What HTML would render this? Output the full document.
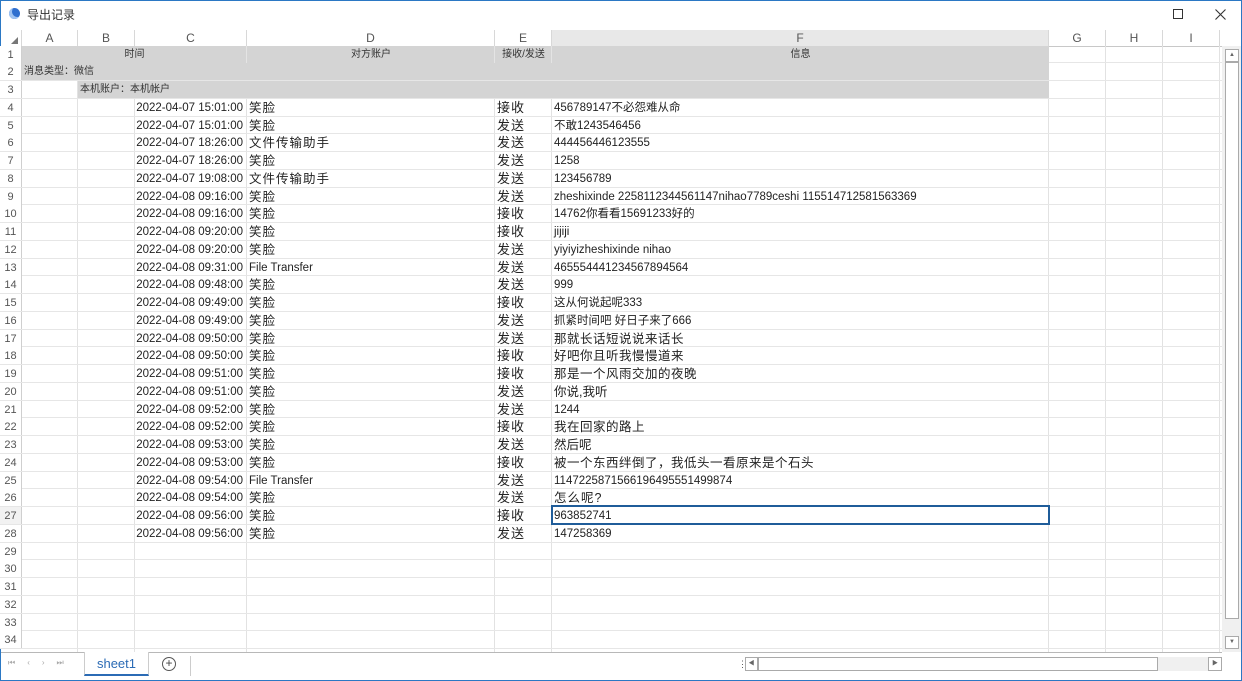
<!DOCTYPE html>
<html><head><meta charset="utf-8"><style>
*{box-sizing:border-box;margin:0;padding:0}
body{width:1242px;height:681px;overflow:hidden;background:#fff;font-family:"Liberation Sans","Noto Sans CJK SC",sans-serif;position:relative}
.win{position:absolute;left:0;top:0;width:1242px;height:681px;border:1px solid #2b78c4}
.title{position:absolute;left:27px;top:6px;font-size:12px;color:#333}
.ico{position:absolute;left:9px;top:8px;width:11px;height:11px;border-radius:50%;background:#2f6fcf;box-shadow:inset 3px -2px 0 #9fc3f2}
.colh{position:absolute;top:30px;height:16px;font-size:12px;color:#555;text-align:center;line-height:16px;border-right:1px solid #d8d8d8}
.hdrline{position:absolute;left:0;top:46px;width:1222px;height:0;border-top:1px solid #c8c8c8}
.vl{position:absolute;top:46px;height:606px;width:1px;background:#e2e2e2}
.grid{position:absolute;left:0;top:45.5px;width:1222px}
.row{position:relative;height:17.75px;border-bottom:1px solid #e6e6e6;font-size:12px;white-space:nowrap}
.rn{position:absolute;left:0;width:22px;text-align:center;color:#555;font-size:11px;line-height:19px;background:#fff;border-right:1px solid #cfcfcf;height:17px}
.g{position:absolute;top:0;height:17px;background:#d4d4d4}
.c{position:absolute;top:0;line-height:18px;color:#222}
.d{left:135px;width:108px;text-align:right;font-size:11.5px}
.p{left:249px;font-size:12.5px;letter-spacing:1px}
.e{left:497px;font-size:13px;letter-spacing:1px}
.f{left:554px;font-size:11.5px}
.sm{font-size:10px;line-height:17px;color:#333}
</style></head><body>
<div class="win"></div>
<div class="ico"></div>
<div class="title">导出记录</div>
<div style="position:absolute;left:1173px;top:9px;width:10px;height:10px;border:1px solid #333"></div>
<svg style="position:absolute;left:1215px;top:9px" width="11" height="11"><path d="M0.5 0.5L10.5 10.5M10.5 0.5L0.5 10.5" stroke="#333" stroke-width="1.1"/></svg>

<div class="colh" style="left:0;width:22px"><span style="position:absolute;right:3px;bottom:2px;width:0;height:0;border-left:7px solid transparent;border-bottom:7px solid #777"></span></div>
<div class="colh" style="left:22px;width:56px">A</div>
<div class="colh" style="left:78px;width:57px">B</div>
<div class="colh" style="left:135px;width:112px">C</div>
<div class="colh" style="left:247px;width:248px">D</div>
<div class="colh" style="left:495px;width:57px">E</div>
<div class="colh" style="left:552px;width:497px;background:#e8e8e8">F</div>
<div class="colh" style="left:1049px;width:57px">G</div>
<div class="colh" style="left:1106px;width:57px">H</div>
<div class="colh" style="left:1163px;width:57px">I</div>
<div class="hdrline"></div>

<div class="vl" style="left:77px"></div><div class="vl" style="left:134px"></div><div class="vl" style="left:246px"></div><div class="vl" style="left:494px"></div><div class="vl" style="left:551px"></div><div class="vl" style="left:1048px"></div><div class="vl" style="left:1105px"></div><div class="vl" style="left:1162px"></div><div class="vl" style="left:1219px"></div>

<div class="grid">
<div class="row"><div class="rn">1</div><div class="g" style="left:22px;width:1027px"></div><div class="g" style="left:246px;width:1px;background:#e4e4e4"></div><div class="g" style="left:494px;width:1px;background:#e4e4e4"></div><div class="g" style="left:551px;width:1px;background:#e4e4e4"></div>
<div class="c sm" style="left:22px;width:225px;text-align:center">时间</div><div class="c sm" style="left:247px;width:248px;text-align:center">对方账户</div><div class="c sm" style="left:495px;width:57px;text-align:center">接收/发送</div><div class="c sm" style="left:552px;width:497px;text-align:center">信息</div></div>
<div class="row"><div class="rn">2</div><div class="g" style="left:22px;width:1027px"></div><div class="c sm" style="left:24px">消息类型：微信</div></div>
<div class="row"><div class="rn">3</div><div class="g" style="left:78px;width:971px"></div><div class="c sm" style="left:80px">本机账户：本机帐户</div></div>
<div class="row"><div class="rn">4</div><span class="c d">2022-04-07 15:01:00</span><span class="c p">笑脸</span><span class="c e">接收</span><span class="c f">456789147不必怨难从命</span></div>
<div class="row"><div class="rn">5</div><span class="c d">2022-04-07 15:01:00</span><span class="c p">笑脸</span><span class="c e">发送</span><span class="c f">不敢1243546456</span></div>
<div class="row"><div class="rn">6</div><span class="c d">2022-04-07 18:26:00</span><span class="c p">文件传输助手</span><span class="c e">发送</span><span class="c f">444456446123555</span></div>
<div class="row"><div class="rn">7</div><span class="c d">2022-04-07 18:26:00</span><span class="c p">笑脸</span><span class="c e">发送</span><span class="c f">1258</span></div>
<div class="row"><div class="rn">8</div><span class="c d">2022-04-07 19:08:00</span><span class="c p">文件传输助手</span><span class="c e">发送</span><span class="c f">123456789</span></div>
<div class="row"><div class="rn">9</div><span class="c d">2022-04-08 09:16:00</span><span class="c p">笑脸</span><span class="c e">发送</span><span class="c f">zheshixinde 2258112344561147nihao7789ceshi 115514712581563369</span></div>
<div class="row"><div class="rn">10</div><span class="c d">2022-04-08 09:16:00</span><span class="c p">笑脸</span><span class="c e">接收</span><span class="c f">14762你看看15691233好的</span></div>
<div class="row"><div class="rn">11</div><span class="c d">2022-04-08 09:20:00</span><span class="c p">笑脸</span><span class="c e">接收</span><span class="c f">jijiji</span></div>
<div class="row"><div class="rn">12</div><span class="c d">2022-04-08 09:20:00</span><span class="c p">笑脸</span><span class="c e">发送</span><span class="c f">yiyiyizheshixinde nihao</span></div>
<div class="row"><div class="rn">13</div><span class="c d">2022-04-08 09:31:00</span><span class="c p" style="font-size:11.5px;letter-spacing:0">File Transfer</span><span class="c e">发送</span><span class="c f">465554441234567894564</span></div>
<div class="row"><div class="rn">14</div><span class="c d">2022-04-08 09:48:00</span><span class="c p">笑脸</span><span class="c e">发送</span><span class="c f">999</span></div>
<div class="row"><div class="rn">15</div><span class="c d">2022-04-08 09:49:00</span><span class="c p">笑脸</span><span class="c e">接收</span><span class="c f">这从何说起呢333</span></div>
<div class="row"><div class="rn">16</div><span class="c d">2022-04-08 09:49:00</span><span class="c p">笑脸</span><span class="c e">发送</span><span class="c f">抓紧时间吧 好日子来了666</span></div>
<div class="row"><div class="rn">17</div><span class="c d">2022-04-08 09:50:00</span><span class="c p">笑脸</span><span class="c e">发送</span><span class="c f" style="font-size:12.5px;letter-spacing:.5px">那就长话短说说来话长</span></div>
<div class="row"><div class="rn">18</div><span class="c d">2022-04-08 09:50:00</span><span class="c p">笑脸</span><span class="c e">接收</span><span class="c f" style="font-size:12.5px;letter-spacing:.5px">好吧你且听我慢慢道来</span></div>
<div class="row"><div class="rn">19</div><span class="c d">2022-04-08 09:51:00</span><span class="c p">笑脸</span><span class="c e">接收</span><span class="c f" style="font-size:12.5px;letter-spacing:.5px">那是一个风雨交加的夜晚</span></div>
<div class="row"><div class="rn">20</div><span class="c d">2022-04-08 09:51:00</span><span class="c p">笑脸</span><span class="c e">发送</span><span class="c f" style="font-size:12.5px">你说,我听</span></div>
<div class="row"><div class="rn">21</div><span class="c d">2022-04-08 09:52:00</span><span class="c p">笑脸</span><span class="c e">发送</span><span class="c f">1244</span></div>
<div class="row"><div class="rn">22</div><span class="c d">2022-04-08 09:52:00</span><span class="c p">笑脸</span><span class="c e">接收</span><span class="c f" style="font-size:12.5px;letter-spacing:.5px">我在回家的路上</span></div>
<div class="row"><div class="rn">23</div><span class="c d">2022-04-08 09:53:00</span><span class="c p">笑脸</span><span class="c e">发送</span><span class="c f" style="font-size:12.5px">然后呢</span></div>
<div class="row"><div class="rn">24</div><span class="c d">2022-04-08 09:53:00</span><span class="c p">笑脸</span><span class="c e">接收</span><span class="c f" style="font-size:12.5px;letter-spacing:.5px">被一个东西绊倒了，我低头一看原来是个石头</span></div>
<div class="row"><div class="rn">25</div><span class="c d">2022-04-08 09:54:00</span><span class="c p" style="font-size:11.5px;letter-spacing:0">File Transfer</span><span class="c e">发送</span><span class="c f">1147225871566196495551499874</span></div>
<div class="row"><div class="rn">26</div><span class="c d">2022-04-08 09:54:00</span><span class="c p">笑脸</span><span class="c e">发送</span><span class="c f" style="font-size:12.5px;letter-spacing:1px">怎么呢?</span></div>
<div class="row"><div class="rn" style="background:#f2f2f2">27</div><span class="c d">2022-04-08 09:56:00</span><span class="c p">笑脸</span><span class="c e">接收</span><span class="c f">963852741</span><div style="position:absolute;left:551px;top:-2px;width:499px;height:20px;border:2px solid #1f5c99"></div></div>
<div class="row"><div class="rn">28</div><span class="c d">2022-04-08 09:56:00</span><span class="c p">笑脸</span><span class="c e">发送</span><span class="c f">147258369</span></div>
<div class="row"><div class="rn">29</div></div>
<div class="row"><div class="rn">30</div></div>
<div class="row"><div class="rn">31</div></div>
<div class="row"><div class="rn">32</div></div>
<div class="row"><div class="rn">33</div></div>
<div class="row"><div class="rn">34</div></div>
</div>

<div style="position:absolute;left:1222px;top:46px;width:19px;height:606px;background:#f0f0f0"></div>
<div style="position:absolute;left:1225px;top:49px;width:14px;height:13px;border:1px solid #aaa;background:#fff;font-size:6px;color:#666;text-align:center;line-height:11px">▲</div>
<div style="position:absolute;left:1225px;top:62px;width:14px;height:557px;border:1px solid #aaa;background:#fff"></div>
<div style="position:absolute;left:1225px;top:636px;width:14px;height:13px;border:1px solid #aaa;background:#fff;font-size:6px;color:#666;text-align:center;line-height:11px">▼</div>

<div style="position:absolute;left:1px;top:652px;width:1221px;height:1px;background:#b8b8b8"></div>
<div style="position:absolute;left:8px;top:658px;font-size:8px;color:#aaa;letter-spacing:12px">⏮‹›⏭</div>
<div style="position:absolute;left:84px;top:652px;width:65px;height:24px;background:#fff;border-left:1px solid #ccc;border-right:1px solid #ccc;border-bottom:2px solid #2b6bb5;color:#2b6bb5;font-size:13px;text-align:center;line-height:24px">sheet1</div>
<div style="position:absolute;left:162px;top:657px;width:14px;height:14px;border:1px solid #555;border-radius:50%;font-size:12px;line-height:11px;text-align:center;color:#444">+</div>
<div style="position:absolute;left:190px;top:656px;width:1px;height:20px;background:#ccc"></div>
<div style="position:absolute;left:738px;top:659px;font-size:9px;color:#555;line-height:10px">⋮</div>
<div style="position:absolute;left:745px;top:657px;width:13px;height:14px;border:1px solid #aaa;font-size:6px;color:#666;text-align:center;line-height:12px">◀</div>
<div style="position:absolute;left:758px;top:657px;width:400px;height:14px;border:1px solid #aaa;background:#fff"></div>
<div style="position:absolute;left:1158px;top:657px;width:50px;height:14px;background:#f0f0f0"></div>
<div style="position:absolute;left:1208px;top:657px;width:14px;height:14px;border:1px solid #aaa;font-size:6px;color:#666;text-align:center;line-height:12px">▶</div>
</body></html>
